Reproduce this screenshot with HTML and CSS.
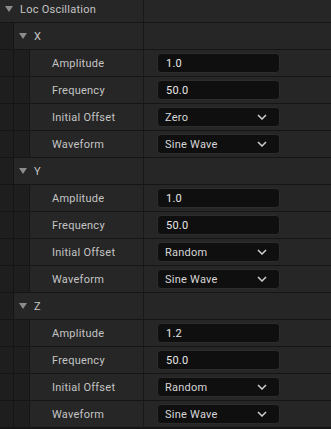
FILE: index.html
```html
<!DOCTYPE html>
<html lang="en">
<head>
<meta charset="utf-8">
<title>Details – Loc Oscillation</title>
<meta name="viewport" content="width=device-width,initial-scale=1">
<link rel="stylesheet" href="styles.css">
</head>
<body>
<div class="panel">

  <div class="row cat">
    <div class="name"><span class="arrow"></span>Loc Oscillation</div>
    <div class="value"></div>
  </div>

  <div class="row cat">
    <div class="name"><span class="indent"></span><span class="arrow"></span>X</div>
    <div class="value"></div>
  </div>
  <div class="row">
    <div class="name"><span class="indent"></span><span class="indent"></span><span class="label">Amplitude</span></div>
    <div class="value"><div class="field">1.0</div></div>
  </div>
  <div class="row">
    <div class="name"><span class="indent"></span><span class="indent"></span><span class="label">Frequency</span></div>
    <div class="value"><div class="field">50.0</div></div>
  </div>
  <div class="row">
    <div class="name"><span class="indent"></span><span class="indent"></span><span class="label">Initial Offset</span></div>
    <div class="value"><div class="combo"><span>Zero</span><svg viewBox="0 0 10 6" width="10" height="6"><polyline points="1,1 5,5 9,1"/></svg></div></div>
  </div>
  <div class="row">
    <div class="name"><span class="indent"></span><span class="indent"></span><span class="label">Waveform</span></div>
    <div class="value"><div class="combo"><span>Sine Wave</span><svg viewBox="0 0 10 6" width="10" height="6"><polyline points="1,1 5,5 9,1"/></svg></div></div>
  </div>

  <div class="row cat">
    <div class="name"><span class="indent"></span><span class="arrow"></span>Y</div>
    <div class="value"></div>
  </div>
  <div class="row">
    <div class="name"><span class="indent"></span><span class="indent"></span><span class="label">Amplitude</span></div>
    <div class="value"><div class="field">1.0</div></div>
  </div>
  <div class="row">
    <div class="name"><span class="indent"></span><span class="indent"></span><span class="label">Frequency</span></div>
    <div class="value"><div class="field">50.0</div></div>
  </div>
  <div class="row">
    <div class="name"><span class="indent"></span><span class="indent"></span><span class="label">Initial Offset</span></div>
    <div class="value"><div class="combo"><span>Random</span><svg viewBox="0 0 10 6" width="10" height="6"><polyline points="1,1 5,5 9,1"/></svg></div></div>
  </div>
  <div class="row">
    <div class="name"><span class="indent"></span><span class="indent"></span><span class="label">Waveform</span></div>
    <div class="value"><div class="combo"><span>Sine Wave</span><svg viewBox="0 0 10 6" width="10" height="6"><polyline points="1,1 5,5 9,1"/></svg></div></div>
  </div>

  <div class="row cat">
    <div class="name"><span class="indent"></span><span class="arrow"></span>Z</div>
    <div class="value"></div>
  </div>
  <div class="row">
    <div class="name"><span class="indent"></span><span class="indent"></span><span class="label">Amplitude</span></div>
    <div class="value"><div class="field">1.2</div></div>
  </div>
  <div class="row">
    <div class="name"><span class="indent"></span><span class="indent"></span><span class="label">Frequency</span></div>
    <div class="value"><div class="field">50.0</div></div>
  </div>
  <div class="row">
    <div class="name"><span class="indent"></span><span class="indent"></span><span class="label">Initial Offset</span></div>
    <div class="value"><div class="combo"><span>Random</span><svg viewBox="0 0 10 6" width="10" height="6"><polyline points="1,1 5,5 9,1"/></svg></div></div>
  </div>
  <div class="row">
    <div class="name"><span class="indent"></span><span class="indent"></span><span class="label">Waveform</span></div>
    <div class="value"><div class="combo"><span>Sine Wave</span><svg viewBox="0 0 10 6" width="10" height="6"><polyline points="1,1 5,5 9,1"/></svg></div></div>
  </div>

</div>
</body>
</html>
```

FILE: styles.css
```css
html,body{margin:0;height:100%;overflow:hidden;background:#151515}
body{font:11px/1 Roboto,"Noto Sans",sans-serif;color:#c4c4c4;letter-spacing:.25px}
.panel{margin-top:-4px}
.row{display:flex;height:26px;border-bottom:1px solid #151515;background:#262626}
.name{width:143px;flex:none;display:flex;align-items:center;border-right:1px solid #181818;white-space:nowrap}
.value{flex:1;display:flex;align-items:center;padding-left:13px}
.indent{align-self:stretch;width:13px;flex:none;background:#1e1e1e;border-right:1px solid #151515}
.indent+.indent{width:15px}
.label{padding-left:22px}
.arrow{width:0;height:0;margin:0 7px 0 5px;border-left:4.5px solid transparent;border-right:4.5px solid transparent;border-top:6px solid #8c8c8c}
.field,.combo{box-sizing:border-box;width:123px;height:20px;background:#0f0f0f;border:1px solid #2c2c2c;border-radius:4px;color:#e8e8e8;display:flex;align-items:center}
.field{padding-left:8px}
.combo{padding:0 12px 0 7px;justify-content:space-between;color:#d6d6d6}
.combo svg{fill:none;stroke:#cfcfcf;stroke-width:1.5}
```
